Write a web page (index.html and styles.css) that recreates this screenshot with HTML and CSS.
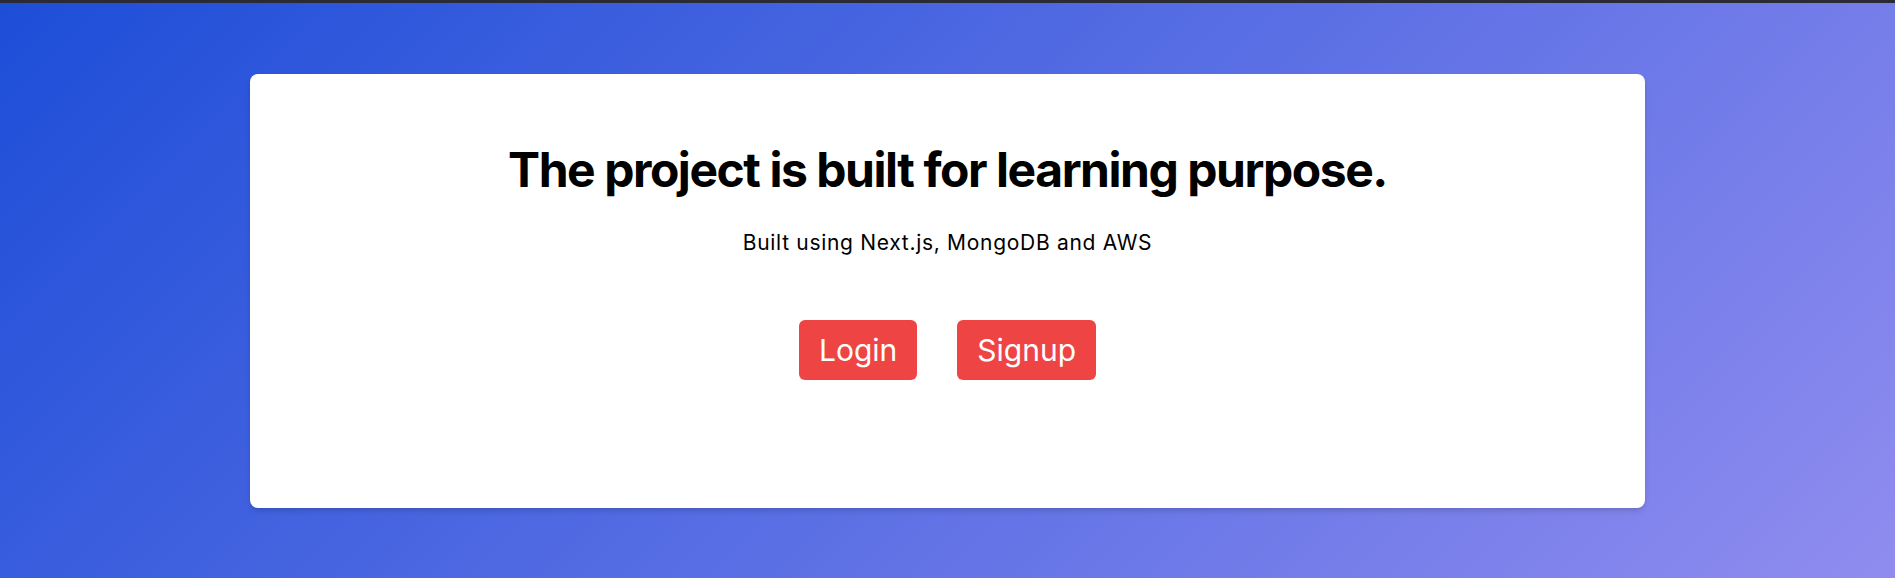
FILE: index.html
```html
<!DOCTYPE html>
<html lang="en">
<head>
<meta charset="utf-8">
<title>Learning project</title>
<link rel="stylesheet" href="styles.css">
</head>
<body>
<main class="page">
  <section class="card">
    <h1 class="title">The project is built for learning purpose.</h1>
    <p class="subtitle">Built using Next.js, MongoDB and AWS</p>
    <div class="actions">
      <a class="btn" href="#">Login</a>
      <a class="btn" href="#">Signup</a>
    </div>
  </section>
</main>
</body>
</html>
```
FILE: styles.css
```css
* { box-sizing: border-box; }
html, body { margin: 0; padding: 0; }
body {
  font-family: Inter, "Noto Sans", sans-serif;
  color: #000;
}
.page {
  min-height: 100vh;
  border-top: 3px solid #2b2b36;
  background: linear-gradient(135deg, #1d4ed8, #908cef);
  display: flex;
  align-items: center;
  justify-content: center;
}
.card {
  width: 1395px;
  height: 434px;
  background: #fff;
  border-radius: 8px;
  box-shadow: 0 4px 6px -1px rgba(0,0,0,0.12), 0 2px 4px -2px rgba(0,0,0,0.1);
  display: flex;
  flex-direction: column;
  align-items: center;
  padding-top: 72px;
}
.title {
  margin: 0;
  font-size: 48px;
  line-height: 48px;
  font-weight: 700;
  letter-spacing: -1.45px;
}
.subtitle {
  margin: 35px 0 0;
  font-size: 21px;
  line-height: 28px;
  letter-spacing: 0.7px;
}
.actions {
  margin-top: 63px;
  display: flex;
  gap: 40px;
}
.btn {
  display: block;
  background: #ef4444;
  color: #fff;
  text-decoration: none;
  font-size: 30px;
  line-height: 36px;
  padding: 12px 20px;
  border-radius: 6px;
}
```
